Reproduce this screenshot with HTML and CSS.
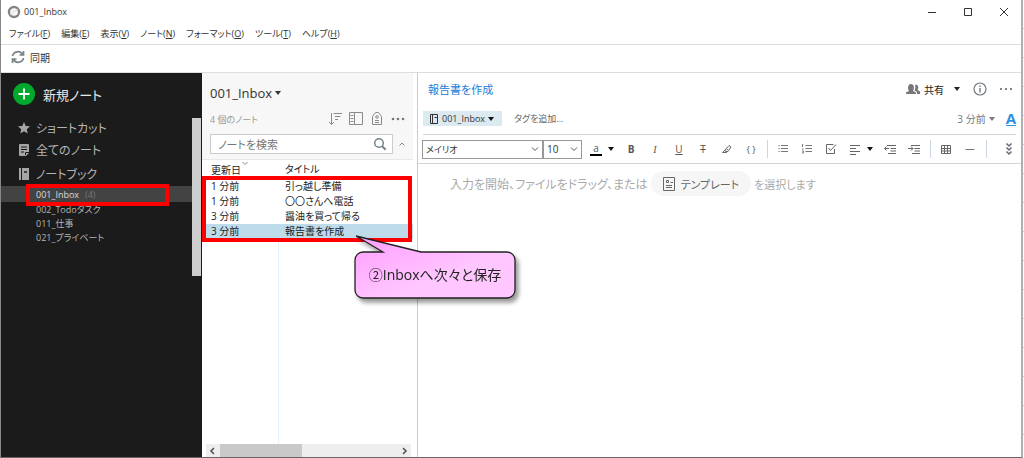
FILE: index.html
```html
<!DOCTYPE html>
<html lang="ja">
<head>
<meta charset="utf-8">
<title>001_Inbox</title>
<link rel="stylesheet" href="styles.css">
</head>
<body>
<div class="desktop">
<div class="window">
  <header class="titlebar">
    <svg class="app-logo" width="14" height="14" viewBox="0 0 14 14"><circle cx="7" cy="7" r="5" fill="none" stroke="#858585" stroke-width="2.4"/><path d="M3 10 L11 4" stroke="#c4c4c4" stroke-width="1"/><circle cx="6" cy="7" r="2.6" fill="#eee"/></svg>
    <span class="window-title">001_Inbox</span>
    <div class="window-controls">
      <button aria-label="最小化"><svg width="12" height="12" viewBox="0 0 12 12"><path d="M2 6.500h8" stroke="#333"/></svg></button>
      <button aria-label="最大化"><svg width="12" height="12" viewBox="0 0 12 12"><path d="M2.500 2.500h7v7h-7z" fill="none" stroke="#333"/></svg></button>
      <button aria-label="閉じる"><svg width="12" height="12" viewBox="0 0 12 12"><path d="M2 2l8 8M10 2l-8 8" stroke="#333"/></svg></button>
    </div>
  </header>
  <nav class="menubar">
    <button>ファイル(<u>F</u>)</button>
    <button>編集(<u>E</u>)</button>
    <button>表示(<u>V</u>)</button>
    <button>ノート(<u>N</u>)</button>
    <button>フォーマット(<u>O</u>)</button>
    <button>ツール(<u>T</u>)</button>
    <button>ヘルプ(<u>H</u>)</button>
  </nav>
  <div class="syncbar">
    <button class="sync"><svg width="14" height="14" viewBox="0 0 14 14" fill="none" stroke="#7b8587" stroke-width="1.700"><path d="M1.500 6a5.400 5.400 0 0 1 10-1.500M12.500 1v4h-4M12.500 8a5.400 5.400 0 0 1-10 1.500M1.500 13V9h4"/></svg>同期</button>
  </div>
  <div class="workspace">
    <aside class="sidebar">
      <button class="new-note"><svg width="22" height="22" viewBox="0 0 22 22"><circle cx="11" cy="11" r="11" fill="#00a82d"/><path d="M11 5.500v11M5.500 11h11" stroke="#fff" stroke-width="1.800"/></svg>新規ノート</button>
      <div class="side-body">
        <div class="side-list">
          <button class="side-item"><svg width="12" height="12" viewBox="0 0 12 12"><path d="M6 0l1.700 3.900 4.300.4-3.200 2.900.9 4.300L6 9.300l-3.700 2.200.9-4.300L0 4.300l4.300-.4z" fill="#a6a6a6"/></svg>ショートカット</button>
          <button class="side-item"><svg width="12" height="12" viewBox="0 0 12 12"><path d="M2 0h8a1 1 0 0 1 1 1v8l-3 3H2a1 1 0 0 1-1-1V1a1 1 0 0 1 1-1z" fill="#a6a6a6"/><path d="M3 3h6M3 5.500h6M3 8h3M7.500 11V8.500H11" stroke="#1a1a1a" fill="none"/></svg>全てのノート</button>
          <button class="side-item"><svg width="12" height="12" viewBox="0 0 12 12"><path d="M1 0h10v12H1z" fill="#a6a6a6"/><path d="M3.500 0v12" stroke="#1a1a1a"/><path d="M6 4h3" stroke="#1a1a1a" stroke-width="1.500"/></svg>ノートブック</button>
          <button class="notebook selected">001_Inbox <span class="count">(4)</span></button>
          <button class="notebook">002_Todoタスク</button>
          <button class="notebook">011_仕事</button>
          <button class="notebook">021_プライベート</button>
          <div class="mark mark-side"></div>
        </div>
        <div class="side-scroll"></div>
      </div>
    </aside>
    <section class="notes">
      <div class="notes-head">
        <button class="notes-title">001_Inbox<i class="caret"></i></button>
        <div class="notes-tools">
          <span class="notes-count">4 個のノート</span>
          <button aria-label="並べ替え"><svg width="14" height="14" viewBox="0 0 14 14" fill="none" stroke="#8a8a8a"><path d="M3.500 1v11.500M1 10l2.500 2.500L6 10M5.500 1.500H14M7 4.500h5.500M7 7.500h3"/></svg></button>
          <button aria-label="表示"><svg width="14" height="14" viewBox="0 0 14 14" fill="none" stroke="#8a8a8a"><path d="M.5.500h13v12H.5zM5.500.500v12M1.500 3.500h3M1.500 6.500h3M1.500 9.500h3"/></svg></button>
          <button aria-label="タグ"><svg width="14" height="14" viewBox="0 0 14 14" fill="none" stroke="#8a8a8a"><path d="M2.500 12.500v-8L5.500.500h3l3 4v8zM5 8.500h4M5 10.500h4"/><circle cx="7" cy="5" r="1.300"/></svg></button>
          <button aria-label="その他"><svg width="14" height="14" viewBox="0 0 14 14" fill="#777"><circle cx="2" cy="7" r="1.300"/><circle cx="7" cy="7" r="1.300"/><circle cx="12" cy="7" r="1.300"/></svg></button>
        </div>
        <div class="search-row">
          <label class="search"><input type="text" placeholder="ノートを検索" aria-label="ノートを検索"><svg width="14" height="14" viewBox="0 0 14 14" fill="none" stroke="#74858a"><circle cx="6" cy="6" r="4.300" stroke-width="1.500"/><path d="M9.200 9.200l3.500 3.500" stroke-width="2"/></svg></label>
          <button aria-label="閉じる"><svg width="6" height="6" viewBox="0 0 6 6"><path d="M.5 4.500L3 2l2.500 2.500" fill="none" stroke="#888"/></svg></button>
        </div>
      </div>
      <div class="table-area">
        <table class="note-table">
          <colgroup><col class="col-date"><col></colgroup>
          <thead><tr><th>更新日<svg class="sort" width="8" height="5" viewBox="0 0 8 5"><path d="M1.500 1L4 3.500 6.500 1" fill="none" stroke="#888"/></svg></th><th>タイトル</th></tr></thead>
          <tbody>
            <tr><td>1 分前</td><td>引っ越し準備</td></tr>
            <tr><td>1 分前</td><td>〇〇さんへ電話</td></tr>
            <tr><td>3 分前</td><td>醤油を買って帰る</td></tr>
            <tr class="current"><td>3 分前</td><td>報告書を作成</td></tr>
          </tbody>
        </table>
        <div class="col-rule"></div>
        <div class="mark mark-table"></div>
        <div class="callout">
          <svg width="172" height="78" viewBox="0 0 172 78"><defs><linearGradient id="pink" x1="0" y1="0" x2="1" y2="1"><stop offset="0" stop-color="#ff9cff"/><stop offset=".6" stop-color="#ffc6ff"/><stop offset="1" stop-color="#ffc6ff"/></linearGradient></defs><path d="M9 19H29L2 3 67 19H153a8 8 0 0 1 8 8V57a8 8 0 0 1-8 8H9a8 8 0 0 1-8-8V27a8 8 0 0 1 8-8z" fill="url(#pink)" stroke="#222" stroke-width="1.300"/></svg>
          <span>②Inboxへ次々と保存</span>
        </div>
      </div>
      <div class="hscroll">
        <svg width="14" height="12" viewBox="0 0 14 12"><path d="M8 3L5 6l3 3" fill="none" stroke="#555" stroke-width="1.600"/></svg>
        <div class="hthumb"></div>
        <svg width="14" height="12" viewBox="0 0 14 12"><path d="M6 3l3 3-3 3" fill="none" stroke="#555" stroke-width="1.600"/></svg>
      </div>
    </section>
    <main class="editor">
      <div class="editor-top">
        <h1>報告書を作成</h1>
        <button class="share"><svg width="14" height="12" viewBox="0 0 14 12" fill="#777"><path d="M0 11V9.500L3 8C1.500 6 1.500 1 5 1s3.500 5 2 7l3 1.500V11zM9 6.500C9.500 5 9.500 3.500 9 2c3.500-1 4 3 2.500 5L14 8.500V11h-3V9L8.500 7.500z"/></svg>共有<i class="caret"></i></button>
        <button aria-label="情報"><svg width="14" height="14" viewBox="0 0 14 14" fill="none" stroke="#6f7b80"><circle cx="7" cy="7" r="6" stroke-width="1.200"/><path d="M7 6v4.500M7 3.500V5" stroke-width="1.400"/></svg></button>
        <button aria-label="その他"><svg width="14" height="14" viewBox="0 0 14 14" fill="#666"><circle cx="2" cy="7" r="1.100"/><circle cx="7" cy="7" r="1.100"/><circle cx="12" cy="7" r="1.100"/></svg></button>
      </div>
      <div class="editor-meta">
        <button class="book"><svg width="10" height="12" viewBox="0 0 10 12" fill="none" stroke="#333"><path d="M1.500 1.500h7v9h-7zM3.500 1.500v9M5.500 4.500H8"/></svg>001_Inbox<i class="caret"></i></button>
        <button class="add-tag">タグを追加...</button>
        <button class="updated">3 分前<i class="caret"></i></button>
        <button class="format-a" aria-label="書式">A</button>
      </div>
      <div class="toolbar">
        <label class="pick pick-font"><select aria-label="フォント"><option>メイリオ</option></select><svg width="8" height="6" viewBox="0 0 8 6"><path d="M1 1.500L4 4.500 7 1.500" fill="none" stroke="#555"/></svg></label>
        <label class="pick pick-size"><select aria-label="サイズ"><option>10</option></select><svg width="8" height="6" viewBox="0 0 8 6"><path d="M1 1.500L4 4.500 7 1.500" fill="none" stroke="#555"/></svg></label>
        <div class="tools">
          <button aria-label="文字色"><span class="color">a</span></button><i class="caret"></i>
          <button class="bold">B</button>
          <button class="italic">I</button>
          <button class="underline">U</button>
          <button class="strike">T</button>
          <button aria-label="蛍光ペン"><svg width="12" height="12" viewBox="0 0 12 12" fill="none" stroke="#666"><path d="M4 7l4-4.500L10 4 7 8.500H4.500zM4 7L1.500 9.500h4L7 8M5.500 6L7 7"/></svg></button>
          <button class="code">{ }</button>
          <i class="rule"></i>
          <button aria-label="箇条書き"><svg width="12" height="12" viewBox="0 0 12 12" stroke="#777"><path d="M1.500 2.500h1.200M4 2.500h7M1.500 5.500h1.200M4 5.500h7M1.500 8.500h1.200M4 8.500h7"/></svg></button>
          <button aria-label="番号付き"><svg width="12" height="12" viewBox="0 0 12 12" stroke="#777" fill="none"><path d="M4.500 2.500H11M4.500 5.500H11M4.500 8.500H11M1.500 1v3M1 6h1.500M1 8h1.500v2H1"/></svg></button>
          <button aria-label="チェック"><svg width="12" height="12" viewBox="0 0 12 12" fill="none" stroke="#666"><path d="M8.500 1.500h-7v9h8V6M3.500 5l2 2.500L11 1.500"/></svg></button>
          <button aria-label="配置"><svg width="12" height="12" viewBox="0 0 12 12" stroke="#666"><path d="M1 2.500h10M1 5.500h6M1 8.500h10M1 11.500h6"/></svg></button><i class="caret"></i>
          <button aria-label="インデント解除"><svg width="12" height="12" viewBox="0 0 12 12" fill="none" stroke="#666"><path d="M3 2.500h9M6.500 5.500H12M6.500 8H12M4 10.500h8M5 5.500H.5M2.500 3.500l-2 2 2 2"/></svg></button>
          <button aria-label="インデント"><svg width="12" height="12" viewBox="0 0 12 12" fill="none" stroke="#666"><path d="M3 2.500h9M6.500 5.500H12M6.500 8H12M4 10.500h8M0 5.500h5M3 3.500l2 2-2 2"/></svg></button>
          <i class="rule"></i>
          <button aria-label="表"><svg width="12" height="12" viewBox="0 0 12 12" fill="none" stroke="#666"><path d="M1.500 2.500h9v8h-9zM1.500 5.500h9M1.500 8h9M4.500 2.500v8M7.500 2.500v8"/></svg></button>
          <button aria-label="区切り線"><svg width="12" height="12" viewBox="0 0 12 12" stroke="#777"><path d="M1.500 6.500h9"/></svg></button>
          <i class="rule"></i>
          <button class="more" aria-label="もっと"><svg width="8" height="14" viewBox="0 0 8 14" fill="none" stroke="#667"><path d="M1.500 1.500L4 4l2.500-2.500M1.500 5.500L4 8l2.500-2.500M1.500 9.500L4 12l2.500-2.500" stroke-width="1.500"/></svg></button>
        </div>
      </div>
      <div class="canvas">
        <span class="lead">入力を開始、ファイルをドラッグ、または</span>
        <button class="template"><svg width="12" height="14" viewBox="0 0 12 14" fill="none" stroke="#666"><path d="M.5.500h11v13H.5zM3.500 3.500h2v2h-2zM7.500 5.500H10M3 8.500h6M3 10.500h6"/></svg>テンプレート</button>
        <span>を選択します</span>
      </div>
    </main>
  </div>
</div>
<div class="behind"></div>
</div>
</body>
</html>
```
FILE: styles.css
```css
* { box-sizing: border-box; }
html, body { height: 100%; margin: 0; }
body {
  font-family: "Open Sans", "Noto Sans CJK JP", sans-serif;
  font-feature-settings: "palt";
  font-size: 10px;
  color: #333;
  background: #fff;
}
button, input, select {
  font: inherit;
  font-feature-settings: inherit;
  color: inherit;
  background: none;
  border: 0;
  padding: 0;
  margin: 0;
}
button { display: flex; align-items: center; white-space: nowrap; }
svg { display: block; flex: none; }
.caret {
  width: 0; height: 0; flex: none;
  border: 3px solid transparent;
  border-top: 4px solid currentColor;
  border-bottom: 0;
}
.desktop { display: flex; height: 100vh; min-height: 400px; }
.window {
  flex: 1; min-width: 0;
  display: flex; flex-direction: column;
  border-left: 1px solid #888;
  border-right: 2px solid #b0b0b0;
  border-bottom: 1px solid #666;
}
.behind { width: 1px; background: repeating-linear-gradient(#fff 0 28px, #ccc 28px 29px); }

.titlebar { display: flex; align-items: center; height: 23px; padding-left: 6px; }
.window-title { margin-left: 3px; font-size: 9px; }
.window-controls { display: flex; gap: 24px; margin-left: auto; padding-right: 11px; }
.menubar { display: flex; gap: 11px; height: 22px; padding-left: 8px; border-bottom: 1px solid #ddd; font-size: 9px; }
.syncbar { display: flex; height: 28px; padding: 0 0 3px 10px; border-bottom: 1px solid #ddd; }
.sync { gap: 5px; }
.workspace { flex: 1; min-height: 0; display: flex; }

.sidebar { width: 201px; flex: none; display: flex; flex-direction: column; background: #1b1b1b; color: #b5b5b5; }
.new-note { height: 44px; padding: 0 0 2px 12px; gap: 8px; font-size: 13px; color: #e8e8e8; }
.side-body { flex: 1; display: flex; }
.side-list { flex: 1; position: relative; }
.side-item { width: 100%; height: 24px; padding-left: 17px; gap: 6px; font-size: 12px; }
.side-item:first-child { height: 21px; }
.notebook { width: 100%; height: 14px; padding-left: 35px; font-size: 9px; }
.notebook.selected { height: 16px; background: #434343; color: #ddd; }
.count { margin-left: 6px; color: #777; }
.side-scroll { width: 9px; height: 158px; margin: 1px 1px 0 0; background: #cdcdcd; }

.mark { position: absolute; border: 4px solid #f00; pointer-events: none; }
.mark-side { left: 25px; top: 67px; width: 143px; height: 22px; }

.notes { width: 216px; flex: none; display: flex; flex-direction: column; border-right: 1px solid #ccc; }
.notes-head { background: #f7f7f7; margin-right: 4px; padding: 9px 8px 5px; border-bottom: 1px solid #e8e8e8; }
.notes-title { gap: 3px; height: 22px; font-size: 13px; }
.notes-tools { display: flex; align-items: center; gap: 7px; height: 30px; }
.notes-count { flex: 1; color: #999; font-size: 9px; }
.search-row { display: flex; align-items: center; gap: 6px; }
.search { flex: 1; display: flex; align-items: center; height: 20px; padding: 0 5px 0 7px; background: #fff; border: 1px solid #ccc; }
.search input { flex: 1; min-width: 0; font-size: 11px; outline: 0; }
.search input::placeholder { color: #777; opacity: 1; }
.table-area { position: relative; flex: 1; display: flex; flex-direction: column; margin-left: 4px; }
.note-table { width: 207px; border-collapse: collapse; table-layout: fixed; color: #222; }
.col-date { width: 74px; }
.note-table th, .note-table td { height: 15px; padding: 0 0 0 5px; text-align: left; font-weight: 400; line-height: 15px; white-space: nowrap; }
.note-table th { height: 19px; }
.sort { display: inline-block; vertical-align: 8px; }
.current { background: #bddbe8; }
.col-rule { flex: 1; width: 73px; border-right: 1px solid #e5f1f9; }
.mark-table { left: -4px; top: 16px; width: 210px; height: 66px; }
.callout { position: absolute; left: 148px; top: 73px; filter: drop-shadow(3px 4px 2px #0006); z-index: 2; }
.callout span { position: absolute; left: 0; top: 19px; width: 162px; line-height: 46px; text-align: center; font-size: 14px; color: #222; white-space: nowrap; }
.hscroll { display: flex; align-items: center; height: 13px; margin: 0 6px 0 4px; background: #eee; }
.hthumb { width: 82px; height: 100%; margin-right: auto; background: #c9c9c9; }

.editor { flex: 1; min-width: 0; display: flex; flex-direction: column; }
.editor-top, .editor-meta { display: flex; align-items: center; margin: 0 5px; }
.editor-top { height: 32px; gap: 12px; padding: 0 3px 0 5px; }
.editor-top h1 { flex: 1; margin: 0; font-size: 11px; font-weight: 400; color: #1c7bd8; }
.share { gap: 4px; color: #222; }
.share .caret { margin: 0 1px 0 6px; }
.editor-meta { height: 30px; padding-bottom: 2px; border-bottom: 1px solid #d5d5d5; }
.book { height: 15px; padding: 0 8px 0 6px; gap: 3px; background: #dbe9f0; font-size: 9px; }
.book .caret { color: #111; }
.add-tag { margin-left: 12px; color: #666; font-size: 9px; }
.updated { margin-left: auto; gap: 3px; color: #777; }
.format-a { margin-left: 11px; font-size: 15px; line-height: 13px; font-weight: 700; color: #2f8fe0; border-bottom: 1px solid #2f8fe0; }
.toolbar { display: flex; align-items: center; height: 29px; padding: 0 0 0 4px; border-bottom: 1px solid #d5d5d5; }
.pick { display: flex; align-items: center; height: 19px; padding: 0 3px; border: 1px solid #999; }
.pick select { flex: 1; min-width: 0; appearance: none; outline: 0; }
.pick-font { width: 121px; font-size: 9px; }
.pick-size { width: 39px; }
.tools { flex: 1; display: flex; align-items: center; padding-left: 2px; color: #555; }
.tools button { width: 24px; justify-content: center; }
.tools .caret { margin-right: 5px; color: #111; }
.color { width: 12px; line-height: 11px; text-align: center; border-bottom: 2px solid #000; }
.bold { font-weight: 700; }
.italic { font-family: "Liberation Serif", serif; font-style: italic; }
.underline { text-decoration: underline; }
.strike { text-decoration: line-through; }
.tools .code { font-size: 9px; }
.rule { width: 1px; height: 18px; margin: 0 3px 0 4px; background: #ccd6e2; }
.tools .more { margin-left: auto; }
.canvas { display: flex; align-items: center; gap: 3px; padding: 7px 0 0 32px; font-size: 11px; color: #aaa; }
.lead { font-size: 12px; }
.template { height: 25px; padding: 0 12px; gap: 6px; border-radius: 13px; background: #f6f6f6; color: #666; }
```
